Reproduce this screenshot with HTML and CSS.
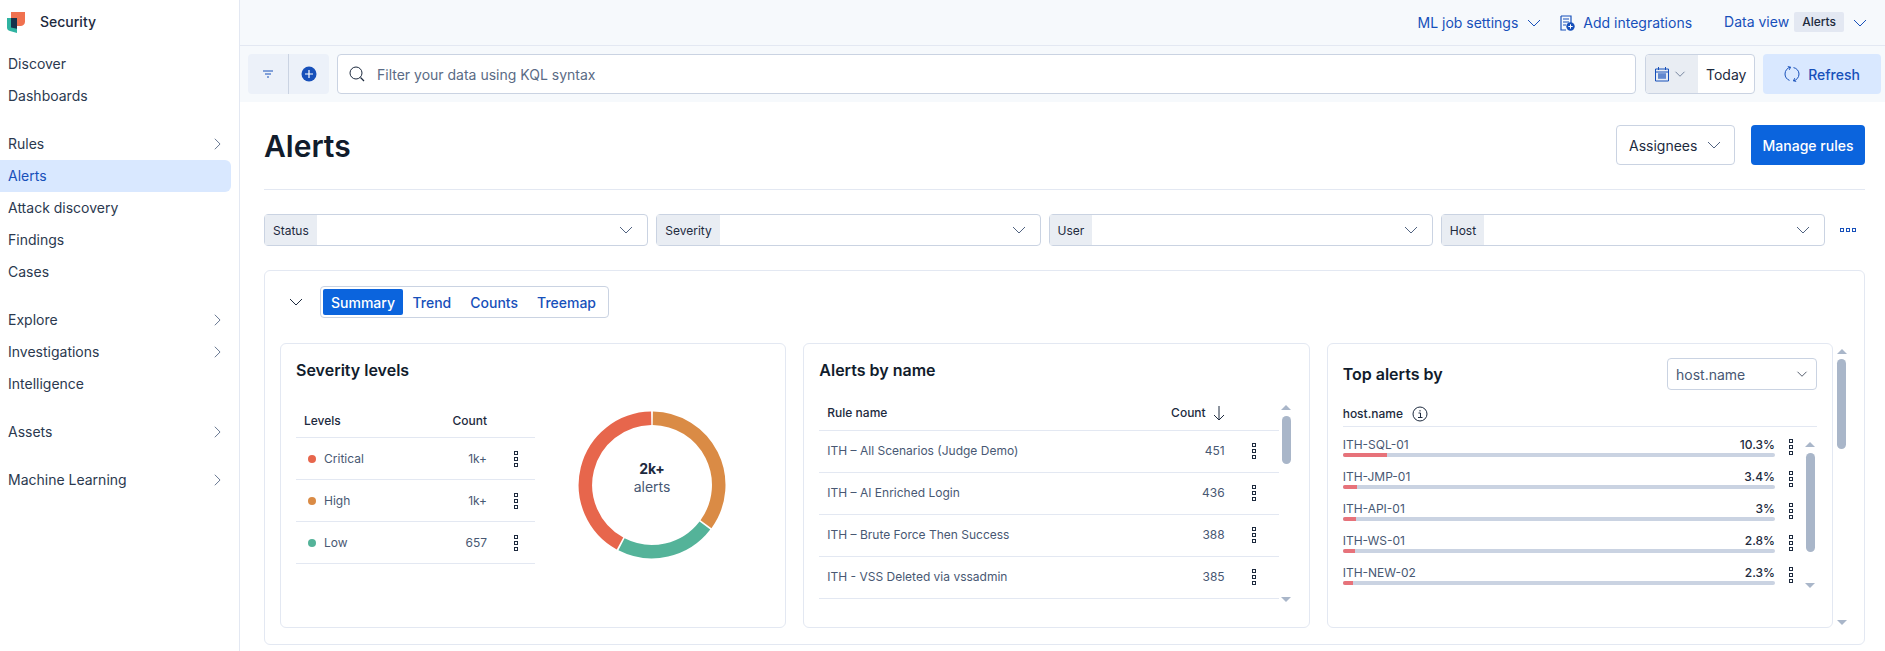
FILE: index.html
```html
<!DOCTYPE html>
<html lang="en">
<head>
<meta charset="utf-8">
<title>Alerts - Security</title>
<link rel="stylesheet" href="styles.css">
</head>
<body>
<svg class="defs" aria-hidden="true">
  <symbol id="chev" viewBox="0 0 16 16"><path d="M2 5l6 6 6-6" fill="none" stroke="currentColor" stroke-width="1"/></symbol>
  <symbol id="chev-r" viewBox="0 0 16 16"><path d="M5.5 2l6 6-6 6" fill="none" stroke="currentColor" stroke-width="1"/></symbol>
  <symbol id="kebab" viewBox="0 0 4 16"><g fill="none" stroke="currentColor"><rect x=".5" y=".5" width="3" height="3"/><rect x=".5" y="6.5" width="3" height="3"/><rect x=".5" y="12.5" width="3" height="3"/></g></symbol>
</svg>
<div class="app">
  <aside class="side">
    <div class="brand">
      <svg class="logo" viewBox="0 0 18 21" width="18" height="21">
        <path d="M4 0h14v9.500c0 2.500-1.500 4-4 4.500H4z" fill="#f0714f"/>
        <path d="M0 6h10v15L3 19c-2-.6-3-1.800-3-3.500z" fill="#2fb3a1"/>
        <path d="M4 6h6v10.800L4 15.500z" fill="#17324a"/>
      </svg>
      <span class="brand-name">Security</span>
    </div>
    <nav class="nav">
      <a class="nav-item">Discover</a>
      <a class="nav-item">Dashboards</a>
      <a class="nav-item nav-gap">Rules<svg class="ic14"><use href="#chev-r"/></svg></a>
      <a class="nav-item active">Alerts</a>
      <a class="nav-item">Attack discovery</a>
      <a class="nav-item">Findings</a>
      <a class="nav-item">Cases</a>
      <a class="nav-item nav-gap">Explore<svg class="ic14"><use href="#chev-r"/></svg></a>
      <a class="nav-item">Investigations<svg class="ic14"><use href="#chev-r"/></svg></a>
      <a class="nav-item">Intelligence</a>
      <a class="nav-item nav-gap">Assets<svg class="ic14"><use href="#chev-r"/></svg></a>
      <a class="nav-item nav-gap">Machine Learning<svg class="ic14"><use href="#chev-r"/></svg></a>
    </nav>
  </aside>
  <main class="main">
    <header class="topbar">
      <span class="link">ML job settings</span>
      <svg class="ic16 link-chev"><use href="#chev"/></svg>
      <svg class="int-ic" viewBox="0 0 16 16" width="16" height="16">
        <path d="M2 1h10v7M7 15H2V1" fill="none" stroke="#1750ba" stroke-width="1.200"/>
        <path d="M4 4h6M4 7h6M4 10h3" stroke="#1750ba" stroke-width="1.200"/>
        <circle cx="11.500" cy="11.500" r="4.200" fill="#1750ba"/>
        <path d="M11.500 9.300v4.400M9.300 11.500h4.400" stroke="#fff"/>
      </svg>
      <span class="link">Add integrations</span>
      <span class="link dv">Data view</span>
      <span class="badge">Alerts</span>
      <svg class="ic16 dv-chev"><use href="#chev"/></svg>
    </header>
    <div class="toolbar">
      <div class="fgroup">
        <span class="fcell">
          <svg viewBox="0 0 16 16" width="16" height="16"><path d="M3 5h10M5 8h6M7 11h2" stroke="#1750ba" stroke-width="1"/></svg>
        </span>
        <span class="fcell">
          <svg viewBox="0 0 16 16" width="16" height="16"><circle cx="8" cy="8" r="7.500" fill="#1750ba"/><path d="M8 4v8M4 8h8" stroke="#fff" stroke-width="1.200"/></svg>
        </span>
      </div>
      <div class="search">
        <svg viewBox="0 0 16 16" width="16" height="16"><circle cx="7" cy="7" r="6" fill="none" stroke="#1d2a3e"/><path d="M11.500 11.500L15 15" stroke="#1d2a3e" stroke-width="1.300"/></svg>
        <span class="placeholder">Filter your data using KQL syntax</span>
      </div>
      <div class="date">
        <span class="date-pre">
          <svg viewBox="0 0 16 16" width="16" height="16"><path d="M1.500 3h13v12h-13zM1.500 6h13M4.500 1v3M11.500 1v3" fill="none" stroke="#1750ba"/><path d="M4 8h8M4 10h8M4 12h8M5 7.500v5M7 7.500v5M9 7.500v5M11 7.500v5" stroke="#1750ba" stroke-width=".8"/></svg>
          <svg class="ic10"><use href="#chev"/></svg>
        </span>
        <span class="date-val">Today</span>
      </div>
      <div class="refresh">
        <svg viewBox="0 0 16 16" width="16" height="16"><path d="M6.500 1.200C3.300 1.800 1 4.600 1 8c0 2.900 1.800 5.400 4.500 6.400M3.800 .6l2.700.6-1.200 2.600M9.500 1.600C12.700 2.200 15 4.900 15 8c0 3.400-2.400 6.200-5.500 6.800M12.200 15.400l-2.700-.6 1.200-2.600" fill="none" stroke="#1750ba"/></svg>
        <span>Refresh</span>
      </div>
    </div>
    <div class="content">
      <div class="page-head">
        <h1 class="title">Alerts</h1>
        <div class="btn-outline">Assignees<svg class="ic16"><use href="#chev"/></svg></div>
        <div class="btn-primary">Manage rules</div>
      </div>
      <div class="filters">
        <div class="filter"><span class="f-label">Status</span><svg class="ic16"><use href="#chev"/></svg></div>
        <div class="filter"><span class="f-label">Severity</span><svg class="ic16"><use href="#chev"/></svg></div>
        <div class="filter"><span class="f-label">User</span><svg class="ic16"><use href="#chev"/></svg></div>
        <div class="filter"><span class="f-label">Host</span><svg class="ic16"><use href="#chev"/></svg></div>
        <svg class="more" viewBox="0 0 16 4" width="16" height="4"><g fill="none" stroke="#1750ba"><rect x=".5" y=".5" width="3" height="3"/><rect x="6.500" y=".5" width="3" height="3"/><rect x="12.500" y=".5" width="3" height="3"/></g></svg>
      </div>
      <section class="panel">
        <div class="panel-head">
          <svg class="ic16 collapse"><use href="#chev"/></svg>
          <div class="tabs">
            <span class="tab on">Summary</span>
            <span class="tab">Trend</span>
            <span class="tab">Counts</span>
            <span class="tab">Treemap</span>
          </div>
        </div>
        <div class="panel-body">
          <div class="cards">
            <article class="card">
              <h2 class="card-title">Severity levels</h2>
              <div class="sev">
                <div class="sev-table">
                  <div class="row head sev-row"><span class="grow">Levels</span><span>Count</span><span class="kb-slot"></span></div>
                  <div class="row sev-row"><span class="grow lab"><i class="dot crit"></i>Critical</span><span>1k+</span><span class="kb-slot"><svg class="kb"><use href="#kebab"/></svg></span></div>
                  <div class="row sev-row"><span class="grow lab"><i class="dot high"></i>High</span><span>1k+</span><span class="kb-slot"><svg class="kb"><use href="#kebab"/></svg></span></div>
                  <div class="row sev-row"><span class="grow lab"><i class="dot low"></i>Low</span><span>657</span><span class="kb-slot"><svg class="kb"><use href="#kebab"/></svg></span></div>
                </div>
                <div class="donut">
                  <svg viewBox="0 0 148 148" width="148" height="148">
                    <g fill="none" stroke-width="13.500">
                      <path d="M74.800 7.250A66.750 66.750 0 0 1 128 113.200" stroke="#da8b45"/>
                      <path d="M126.900 114.500A66.750 66.750 0 0 1 43.500 133.300" stroke="#54b399"/>
                      <path d="M42 132.500A66.750 66.750 0 0 1 73.200 7.250" stroke="#e7664c"/>
                    </g>
                  </svg>
                  <div class="donut-txt"><b>2k+</b><span>alerts</span></div>
                </div>
              </div>
            </article>
            <article class="card">
              <h2 class="card-title">Alerts by name</h2>
              <div class="names">
                <div class="names-table">
                  <div class="row head name-row"><span class="grow">Rule name</span><span>Count</span><svg class="sort" viewBox="0 0 12 16" width="12" height="16"><path d="M6 1v14M1 10l5 5 5-5" fill="none" stroke="#1d2a3e"/></svg></div>
                  <div class="row name-row"><span class="grow">ITH – All Scenarios (Judge Demo)</span><span>451</span><span class="kb-slot2"><svg class="kb"><use href="#kebab"/></svg></span></div>
                  <div class="row name-row"><span class="grow">ITH – AI Enriched Login</span><span>436</span><span class="kb-slot2"><svg class="kb"><use href="#kebab"/></svg></span></div>
                  <div class="row name-row"><span class="grow">ITH – Brute Force Then Success</span><span>388</span><span class="kb-slot2"><svg class="kb"><use href="#kebab"/></svg></span></div>
                  <div class="row name-row"><span class="grow">ITH - VSS Deleted via vssadmin</span><span>385</span><span class="kb-slot2"><svg class="kb"><use href="#kebab"/></svg></span></div>
                </div>
                <div class="sbar sbar-names"><i class="up"></i><i class="thumb t-names"></i><i class="down"></i></div>
              </div>
            </article>
            <article class="card">
              <div class="top-head">
                <h2 class="card-title">Top alerts by</h2>
                <div class="select">host.name<svg class="ic14b"><use href="#chev"/></svg></div>
              </div>
              <div class="top-field">host.name
                <svg viewBox="0 0 16 16" width="16" height="16"><circle cx="8" cy="8" r="7" fill="none" stroke="#1d2a3e"/><path d="M6.500 7h2v4.500M6 11.500h4.500M8 4v1.500" fill="none" stroke="#1d2a3e"/></svg>
              </div>
              <div class="tops">
                <div class="bars">
                  <div class="bar-row"><div class="bar-main"><div class="bar-txt"><span>ITH-SQL-01</span><b>10.3%</b></div><div class="track"><div class="fill" style="width:10.300%"></div></div></div><svg class="kb"><use href="#kebab"/></svg></div>
                  <div class="bar-row"><div class="bar-main"><div class="bar-txt"><span>ITH-JMP-01</span><b>3.4%</b></div><div class="track"><div class="fill" style="width:3.400%"></div></div></div><svg class="kb"><use href="#kebab"/></svg></div>
                  <div class="bar-row"><div class="bar-main"><div class="bar-txt"><span>ITH-API-01</span><b>3%</b></div><div class="track"><div class="fill" style="width:3%"></div></div></div><svg class="kb"><use href="#kebab"/></svg></div>
                  <div class="bar-row"><div class="bar-main"><div class="bar-txt"><span>ITH-WS-01</span><b>2.8%</b></div><div class="track"><div class="fill" style="width:2.800%"></div></div></div><svg class="kb"><use href="#kebab"/></svg></div>
                  <div class="bar-row"><div class="bar-main"><div class="bar-txt"><span>ITH-NEW-02</span><b>2.3%</b></div><div class="track"><div class="fill" style="width:2.300%"></div></div></div><svg class="kb"><use href="#kebab"/></svg></div>
                </div>
                <div class="sbar sbar-top"><i class="up"></i><i class="thumb t-top"></i><i class="down"></i></div>
              </div>
            </article>
          </div>
          <div class="sbar sbar-outer"><i class="up"></i><i class="thumb t-outer"></i><i class="down"></i></div>
        </div>
      </section>
    </div>
  </main>
</div>
</body>
</html>
```
FILE: styles.css
```css
* { box-sizing: border-box; }
html, body { margin: 0; height: 100%; }
body {
  font-family: Inter, "Liberation Sans", sans-serif;
  font-size: 14px;
  color: #1d2a3e;
  background: #fff;
  overflow: hidden;
}
.defs { display: none; }
.app { display: flex; height: 651px; }

/* sidebar */
.side { width: 240px; flex: none; border-right: 1px solid #e3e8f2; }
.brand { display: flex; align-items: center; height: 44px; padding-left: 7px; }
.logo { flex: none; }
.brand-name { margin: -1px 0 0 15px; font-weight: 500; color: #1d2a3e; }
.nav { display: flex; flex-direction: column; width: 231px; padding-top: 4px; }
.nav-item {
  display: flex; align-items: center; justify-content: space-between;
  height: 32px; padding: 0 7px 0 8px; color: #2b394f; line-height: 32px;
}
.nav-gap { margin-top: 16px; }
.active { background: #d9e8ff; color: #1750ba; border-radius: 0 6px 6px 0; }
.ic14 { width: 14px; height: 14px; color: #516381; }

/* top bar */
.main { flex: 1; min-width: 0; display: flex; flex-direction: column; }
.topbar {
  display: flex; align-items: center; justify-content: flex-end;
  height: 46px; flex: none; padding-right: 17px;
  background: #f6f9fc; border-bottom: 1px solid #e3e8f2;
}
.link { color: #1750ba; }
.ic16 { width: 16px; height: 16px; flex: none; color: #516381; }
.link-chev { margin-left: 8px; color: #1750ba; }
.int-ic { margin-left: 17px; margin-right: 8px; }
.dv { margin-left: 32px; margin-top: -2px; }
.badge {
  display: flex; align-items: center; height: 20px; margin: -2px 0 0 5px; padding: 0 8px;
  background: #e3e8f2; color: #1d2a3e; font-size: 12px; font-weight: 500; border-radius: 2px;
}
.dv-chev { margin-left: 8px; color: #1750ba; }

/* toolbar */
.toolbar {
  display: flex; align-items: center; height: 56px; flex: none;
  padding: 0 4px 0 8px; gap: 8px; background: #f6f9fc;
}
.fgroup { display: flex; width: 81px; height: 40px; flex: none; background: #ecf1f9; border-radius: 4px; }
.fcell { flex: 1; display: flex; align-items: center; justify-content: center; }
.fcell + .fcell { border-left: 1px solid #cad3e2; }
.search {
  flex: 1; min-width: 0; display: flex; align-items: center; gap: 12px; height: 40px; padding-left: 11px;
  background: #fff; border: 1px solid #cad3e2; border-radius: 4px;
}
.placeholder { color: #5a6b85; }
.date {
  display: flex; width: 110px; height: 40px; flex: none; margin-left: 1px;
  background: #fff; border: 1px solid #cad3e2; border-radius: 4px; overflow: hidden;
}
.date-pre { display: flex; align-items: center; gap: 4px; width: 52px; padding-left: 8px; background: #e9edf3; }
.ic10 { width: 12px; height: 12px; color: #516381; }
.date-val { display: flex; align-items: center; padding-left: 8px; color: #1d2a3e; }
.refresh {
  display: flex; align-items: center; justify-content: center; gap: 8px; width: 118px; height: 40px; flex: none;
  background: #d9e8ff; color: #1750ba; font-weight: 500; border-radius: 4px;
}

/* page */
.content { padding: 23px 20px 0 24px; }
.page-head {
  display: flex; align-items: center; gap: 16px; height: 65px; padding-bottom: 24px;
  border-bottom: 1px solid #e3e8f2;
}
.title { flex: 1; margin: 0; padding-top: 1px; font-size: 30px; line-height: 40px; font-weight: 600; color: #111c2c; }
.btn-outline {
  display: flex; align-items: center; gap: 9px; height: 40px; padding: 0 11px 0 12px; width: 119px;
  border: 1px solid #cad3e2; border-radius: 4px; color: #1d2a3e;
}
.btn-primary {
  display: flex; align-items: center; justify-content: center; width: 114px; height: 40px;
  background: #0b64dd; color: #fff; font-weight: 500; border-radius: 4px;
}
.filters { display: flex; align-items: center; gap: 8px; margin-top: 24px; }
.filter {
  flex: 1; display: flex; align-items: center; justify-content: space-between; height: 32px; padding-right: 13px;
  border: 1px solid #cad3e2; border-radius: 4px;
}
.f-label {
  display: flex; align-items: center; height: 100%; padding: 0 8px; background: #e9edf3;
  font-size: 12px; font-weight: 400; color: #1d2a3e;
}
.more { flex: none; margin: 0 9px 0 7px; }

/* panel */
.panel { height: 375px; margin-top: 24px; padding: 15px 18px 0 15px; border: 1px solid #e3e8f2; border-radius: 6px; }
.panel-head { display: flex; align-items: center; height: 32px; }
.collapse { margin-left: 8px; color: #1d2a3e; }
.tabs {
  display: flex; align-items: center; height: 32px; margin-left: 16px; padding: 0 2px; width: 289px;
  border: 1px solid #cad3e2; border-radius: 4px;
}
.tab { display: flex; align-items: center; height: 26px; padding: 0 9.500px; color: #1750ba; font-weight: 500; }
.tab.on { padding: 0 8px; background: #0b64dd; color: #fff; font-weight: 500; border-radius: 2px; }
.panel-body { display: flex; gap: 4px; margin-top: 25px; }
.cards { flex: 1; min-width: 0; display: flex; gap: 17px; }
.card {
  flex: 1; min-width: 0; height: 285px; padding: 14px 15px 0; position: relative;
  border: 1px solid #e3e8f2; border-radius: 6px;
}
.card-title { margin: 0; font-size: 16px; line-height: 24px; font-weight: 600; color: #111c2c; }

.row { display: flex; align-items: center; font-size: 12px; color: #485873; border-bottom: 1px solid #e3e8f2; }
.row.head { color: #1d2a3e; font-weight: 500; }
.grow { flex: 1; min-width: 0; }

.sev { display: flex; margin-top: 22px; }
.sev-table { width: 239px; flex: none; }
.sev-row { height: 42px; padding-left: 8px; }
.sev-row.head { height: 34px; padding-bottom: 0; }
.lab { display: flex; align-items: center; gap: 8px; padding-left: 4px; }
.dot { width: 8px; height: 8px; border-radius: 50%; }
.crit { background: #e7664c; }
.high { background: #da8b45; }
.low { background: #54b399; }
.kb-slot { display: flex; justify-content: center; width: 48px; padding-left: 10px; }
.kb { width: 4px; height: 16px; flex: none; color: #1d2a3e; }
.donut { position: relative; width: 148px; height: 148px; margin: 7px 0 0 43px; }
.donut-txt {
  position: absolute; inset: 0; display: flex; flex-direction: column; align-items: center; justify-content: center;
  font-size: 14px; line-height: 18px; color: #485873; padding-bottom: 14px;
}
.donut-txt b { color: #1d2a3e; font-weight: 700; }

.names { display: flex; margin-top: 15px; }
.names-table { flex: 1; min-width: 0; margin-right: 3px; }
.name-row { height: 42px; padding: 0 0 2px 8px; }
.name-row.head { height: 34px; padding-bottom: 2px; }
.sort { margin: 0 54px 0 7px; }
.kb-slot2 { display: flex; justify-content: center; width: 54px; padding-left: 5px; }
.sbar { display: flex; flex-direction: column; align-items: center; width: 9px; flex: none; position: relative; }
.up, .down { width: 0; height: 0; border-left: 5.500px solid transparent; border-right: 5.500px solid transparent; }
.up { border-bottom: 5px solid #a9b6c9; }
.down { border-top: 5px solid #a9b6c9; }
.thumb { width: 9px; background: #a9b6c9; border-radius: 5px; }
.sbar-names { margin: 8px 3px 0 0; }
.t-names { height: 48px; margin: 6px 0 133px; }
.top-head { display: flex; align-items: center; justify-content: space-between; height: 32px; margin-right: 0; }
.select {
  display: flex; align-items: center; justify-content: space-between; width: 150px; height: 32px; padding: 0 8px;
  border: 1px solid #cad3e2; border-radius: 4px; color: #485873;
}
.ic14b { width: 12px; height: 12px; color: #1d2a3e; }
.top-field {
  display: flex; align-items: center; gap: 9px; height: 37px; padding-top: 11px;
  font-size: 12px; font-weight: 500; color: #1d2a3e; border-bottom: 1px solid #e3e8f2;
}
.tops { display: flex; margin-top: 7px; }
.bars { flex: 1; min-width: 0; }
.bar-row { display: flex; align-items: flex-start; gap: 14px; height: 32px; }
.bar-main { flex: 1; min-width: 0; }
.bar-txt { display: flex; justify-content: space-between; height: 19px; font-size: 12px; line-height: 21px; color: #485873; }
.bar-txt b { font-weight: 500; color: #1d2a3e; }
.track { height: 4px; background: #cad3e2; border-radius: 2px; overflow: hidden; }
.fill { height: 100%; background: #e7727a; }
.bar-row .kb { margin-top: 5px; }
.sbar-top { margin: 8px 2px 0 13px; }
.t-top { height: 99px; margin: 6px 0 31px; }
.sbar-outer { margin-top: 6px; }
.t-outer { height: 90px; margin: 5px 0 171px; }
```
